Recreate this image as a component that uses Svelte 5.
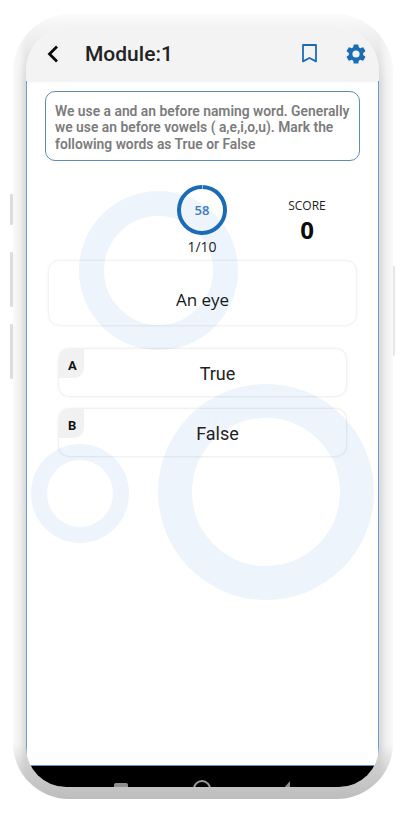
<script>
	let options = [
		{ key: 'A', label: 'True' },
		{ key: 'B', label: 'False' }
	];
</script>

<div class="page">
	<div class="side-btn b1"></div>
	<div class="side-btn b2"></div>
	<div class="side-btn b3"></div>
	<div class="side-btn b4"></div>
	<div class="phone">
		<div class="screen">
			<header class="bar">
				<svg class="back" width="14" height="20" viewBox="0 0 14 20" fill="none">
					<path d="M11 2.5 3.5 10l7.5 7.5" stroke="#0b0b0b" stroke-width="2.8" />
				</svg>
				<h1>Module:1</h1>
				<svg class="mark" width="15" height="19" viewBox="0 0 15 19" fill="none">
					<path d="M1 1h13v16.4L7.5 14 1 17.4z" stroke="#1b6cb5" stroke-width="1.8" stroke-linejoin="round" />
				</svg>
				<svg class="gear" width="24" height="24" viewBox="0 0 24 24">
					<path
						fill="#1b6cb5"
						d="M19.14 12.94c.04-.3.06-.61.06-.94s-.02-.64-.07-.94l2.03-1.58a.49.49 0 0 0 .12-.61l-1.92-3.32a.49.49 0 0 0-.59-.22l-2.39.96c-.5-.38-1.03-.7-1.62-.94l-.36-2.54a.48.48 0 0 0-.48-.41h-3.84a.48.48 0 0 0-.47.41l-.36 2.54c-.59.24-1.13.57-1.62.94l-2.39-.96a.49.49 0 0 0-.59.22L2.74 8.87a.48.48 0 0 0 .12.61l2.03 1.58c-.05.3-.09.63-.09.94s.02.64.07.94l-2.03 1.58a.49.49 0 0 0-.12.61l1.92 3.32c.12.22.37.29.59.22l2.39-.96c.5.38 1.03.7 1.62.94l.36 2.54c.05.24.24.41.48.41h3.84c.24 0 .44-.17.47-.41l.36-2.54c.59-.24 1.13-.56 1.62-.94l2.39.96c.22.08.47 0 .59-.22l1.92-3.32a.48.48 0 0 0-.12-.61zM12 15.6A3.6 3.6 0 1 1 12 8.4a3.6 3.6 0 0 1 0 7.2z"
					/>
				</svg>
			</header>

			<main class="body">
				<div class="ring r1"></div>
				<div class="ring r2"></div>
				<div class="ring r3"></div>

				<p class="hint">
					We use a and an before naming word. Generally we use an before vowels ( a,e,i,o,u). Mark the
					following words as True or False
				</p>

				<div class="stats">
					<div class="timer">
						<div class="dial">
							<svg width="50" height="50" viewBox="0 0 50 50" fill="none">
								<circle cx="25" cy="25" r="23" stroke="#1b6cb5" stroke-width="4" stroke-dasharray="143 1.5" transform="rotate(-88 25 25)" />
							</svg>
							<span>58</span>
						</div>
						<div class="count">1/10</div>
					</div>
					<div class="score">
						<div class="score-label">SCORE</div>
						<div class="score-value">0</div>
					</div>
				</div>

				<div class="question">An eye</div>

				<div class="options">
					{#each options as opt}
						<div class="option">
							<span class="badge">{opt.key}</span>
							<span class="label">{opt.label}</span>
						</div>
					{/each}
				</div>
			</main>

			<footer class="nav">
				<span class="square"></span>
				<span class="circle"></span>
				<svg class="tri" width="12" height="14" viewBox="0 0 12 14">
					<path d="M12 0v14H0z" fill="#8f8f8f" />
				</svg>
			</footer>
		</div>
	</div>
</div>

<style>
	:global(body) {
		background: #fff;
	}
	.page {
		position: relative;
		width: 404px;
		height: 814px;
		padding: 27px 25px 27px 26px;
		box-sizing: border-box;
		overflow: hidden;
		font-family: 'Open Sans', sans-serif;
	}
	.side-btn {
		position: absolute;
		width: 3px;
		background: #dcdcdc;
		border-radius: 1px;
	}
	.b1 {
		left: 10px;
		top: 194px;
		height: 31px;
	}
	.b2 {
		left: 10px;
		top: 252px;
		height: 55px;
	}
	.b3 {
		left: 10px;
		top: 324px;
		height: 55px;
	}
	.b4 {
		left: 392px;
		top: 266px;
		height: 90px;
		background: #e6e6e6;
	}
	.phone {
		height: 100%;
		position: relative;
	}
	.phone::before {
		content: '';
		position: absolute;
		inset: -13px -14px -12px -13px;
		border-radius: 58px 58px 56px 56px;
		background:
			linear-gradient(to bottom, #fbfbfb 0, rgba(251, 251, 251, 0) 70px),
			linear-gradient(to bottom, rgba(192, 192, 192, 0) 93%, #c6c6c6 98%, #bdbdbd 100%),
			linear-gradient(to right, #fafafa 0, #efefef 7px, #d8d8d8 13px, #d8d8d8 calc(100% - 14px), #efefef calc(100% - 7px), #fafafa 100%);
	}
	.screen {
		position: relative;
		height: 100%;
		display: flex;
		flex-direction: column;
		background: #fff;
		border-radius: 44px 44px 40px 40px;
		overflow: hidden;
	}
	.bar {
		flex: none;
		height: 54px;
		display: flex;
		align-items: center;
		background: #f3f3f3;
		padding: 0 12px 0 20px;
		box-shadow: 0 1px 2px rgba(0, 0, 0, 0.06);
		position: relative;
		z-index: 2;
	}
	.back {
		margin-top: -1px;
	}
	h1 {
		margin: -1px 0 0 25px;
		flex: 1;
		font: 500 21px 'Roboto', sans-serif;
		color: #222;
	}
	.mark {
		margin-right: 27px;
		margin-top: -1px;
	}
	.gear {
		margin-right: -1px;
		margin-top: -1px;
	}
	.body {
		position: relative;
		flex: 1;
		min-height: 0;
		border-left: 1px solid #6f9fd0;
		border-right: 1px solid #6f9fd0;
		border-bottom: 1px solid #5f93cb;
		padding: 10px 18px 0 18px;
	}
	.ring {
		position: absolute;
		border-style: solid;
		border-color: #eef4fc;
		border-radius: 50%;
		box-sizing: border-box;
	}
	.r1 {
		left: 52px;
		top: 110px;
		width: 159px;
		height: 159px;
		border-width: 25px;
	}
	.r2 {
		left: 4px;
		top: 363px;
		width: 98px;
		height: 99px;
		border-width: 16px;
	}
	.r3 {
		left: 131px;
		top: 303px;
		width: 216px;
		height: 216px;
		border-width: 34px;
	}
	.hint {
		position: relative;
		margin: 0;
		box-sizing: border-box;
		height: 70px;
		padding: 11px 3px 0 9px;
		border: 1px solid #5d8db3;
		border-radius: 10px;
		background: #fff;
		font: 600 13.85px/16.4px 'Roboto', sans-serif;
		color: #7c7c7c;
	}
	.stats {
		position: relative;
		display: flex;
		margin-top: 24px;
		height: 77px;
	}
	.timer {
		margin-left: 132px;
		width: 50px;
		display: flex;
		flex-direction: column;
		align-items: center;
	}
	.dial {
		position: relative;
		width: 50px;
		height: 50px;
	}
	.dial svg {
		display: block;
	}
	.dial span {
		position: absolute;
		inset: 0;
		display: flex;
		align-items: center;
		justify-content: center;
		font-size: 13px;
		font-weight: 600;
		color: #3a7cc0;
	}
	.count {
		margin-top: 2px;
		font-size: 14px;
		line-height: 19px;
		color: #222;
	}
	.score {
		margin-left: 61px;
		width: 38px;
		display: flex;
		flex-direction: column;
		align-items: center;
		margin-top: 12px;
		color: #222;
	}
	.score-label {
		font-size: 12px;
		line-height: 18px;
	}
	.score-value {
		font-size: 24px;
		font-weight: 700;
		line-height: 30px;
		color: #0c0c0c;
	}
	.question {
		position: relative;
		margin: -1px 4px 0 4px;
		height: 64px;
		box-sizing: border-box;
		display: flex;
		align-items: center;
		justify-content: center;
		padding-top: 12px;
		font-size: 17px;
		color: #161616;
		border-radius: 10px;
		box-shadow: 0 0 3px rgba(0, 0, 0, 0.14);
	}
	.options {
		position: relative;
		margin: 24px 14px 0 14px;
		display: flex;
		flex-direction: column;
		gap: 13px;
	}
	.option {
		position: relative;
		height: 47px;
		box-sizing: border-box;
		display: flex;
		align-items: center;
		justify-content: center;
		padding: 2px 0 0 30px;
		border-radius: 10px;
		box-shadow: 0 0 3px rgba(0, 0, 0, 0.16);
		font: 400 18px 'Roboto', sans-serif;
		color: #222;
	}
	.badge {
		position: absolute;
		left: 0;
		top: 0;
		width: 25px;
		height: 29px;
		box-sizing: border-box;
		padding: 9px 0 0 9px;
		background: #f1f1f1;
		border-radius: 10px 0 10px 0;
		font: 700 13px/16px 'Roboto', sans-serif;
		color: #111;
	}
	.nav {
		flex: none;
		height: 21px;
		position: relative;
		background: #000;
		overflow: hidden;
	}
	.square {
		position: absolute;
		left: 88px;
		top: 17px;
		width: 14px;
		height: 12px;
		border-radius: 2px;
		background: #8f8f8f;
	}
	.circle {
		position: absolute;
		left: 167px;
		top: 14px;
		width: 18px;
		height: 18px;
		box-sizing: border-box;
		border: 2px solid #9a9a9a;
		border-radius: 50%;
	}
	.tri {
		position: absolute;
		left: 252px;
		top: 15px;
	}
</style>
